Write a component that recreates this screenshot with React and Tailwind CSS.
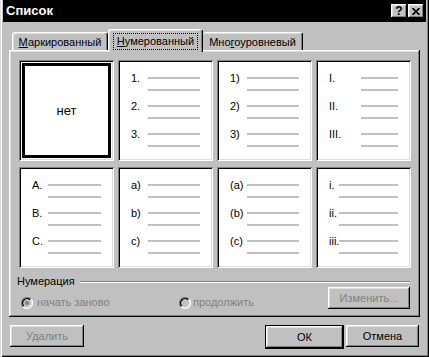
import React from 'react'

const raised = "shadow-[inset_-1px_-1px_0_#000,inset_1px_1px_0_#fff,inset_-2px_-2px_0_#808080,inset_2px_2px_0_#dfdfdf]";
const sunken = "shadow-[inset_1px_1px_0_#808080,inset_-1px_-1px_0_#fff,inset_2px_2px_0_#000,inset_-2px_-2px_0_#dfdfdf]";

const tiles = [
    { labels: ["1.", "2.", "3."], lw: "w-[17px]", ln: "w-[52px]" },
    { labels: ["1)", "2)", "3)"], lw: "w-[17px]", ln: "w-[52px]" },
    { labels: ["I.", "II.", "III."], lw: "w-[32px]", ln: "w-[37px]" },
    { labels: ["A.", "B.", "C."], lw: "w-[16px]", ln: "w-[53px]" },
    { labels: ["a)", "b)", "c)"], lw: "w-[17px]", ln: "w-[52px]" },
    { labels: ["(a)", "(b)", "(c)"], lw: "w-[17px]", ln: "w-[52px]" },
    { labels: ["i.", "ii.", "iii."], lw: "w-[10px]", ln: "w-[59px]" },
]

const ListTile = ({ tile }) => (
    <div className={`bg-white ${sunken} flex flex-col gap-[9px] pt-[12px] pl-[13px]`}>
        {tile.labels.map((l) => (
            <div key={l} className="flex flex-col gap-[5px]">
                <div className="flex h-[12px] items-center">
                    <span className={`${tile.lw} shrink-0 whitespace-nowrap text-[11px] leading-[12px] text-black`}>{l}</span>
                    <span className={`${tile.ln} h-[2px] bg-[#c0c0c0]`} />
                </div>
                <div className="flex">
                    <span className={`${tile.lw} shrink-0`} />
                    <span className={`${tile.ln} h-[2px] bg-[#c0c0c0]`} />
                </div>
            </div>
        ))}
    </div>
)

const Radio = ({ checked }) => (
    <svg width="12" height="12" viewBox="0 0 12 12" className="shrink-0">
        <circle cx="6" cy="6" r="5" fill="#c0c0c0" />
        <path d="M2.11 9.89 A5.5 5.5 0 0 1 9.89 2.11" stroke="#808080" strokeWidth="1.3" fill="none" />
        <path d="M9.89 2.11 A5.5 5.5 0 0 1 2.11 9.89" stroke="#fff" strokeWidth="1.3" fill="none" />
        <path d="M2.82 9.18 A4.5 4.5 0 0 1 9.18 2.82" stroke="#000" strokeWidth="1.3" fill="none" />
        <path d="M9.18 2.82 A4.5 4.5 0 0 1 2.82 9.18" stroke="#dfdfdf" strokeWidth="1.3" fill="none" />
        {checked && <circle cx="6" cy="6" r="2" fill="#808080" />}
    </svg>
)

const Button = ({ children, className = "", disabled }) => (
    <div className={`flex h-[22px] items-center justify-center bg-[#c0c0c0] ${raised} text-[11px] ${disabled ? "text-[#808080]" : "text-black"} ${className}`}>
        {children}
    </div>
)

export default function App() {
    return (
        <div className="flex h-[357px] w-[429px] flex-col bg-[#c0c0c0] px-[3px] pb-[3px] font-['Liberation_Sans',Arial,sans-serif] shadow-[inset_1px_0_0_#dfdfdf,inset_2px_0_0_#fff,inset_-1px_-1px_0_#000,inset_-2px_-2px_0_#808080]">
            {/* Title bar */}
            <div className="flex h-[22px] shrink-0 items-center bg-black pl-[3px] pr-[2px]">
                <span className="text-[13px] font-bold text-white">Список</span>
                <div className="ml-auto flex gap-[1px]">
                    <div className={`flex h-[14px] w-[16px] items-center justify-center bg-[#c0c0c0] ${raised} text-[12px] font-bold leading-none text-black`}>?</div>
                    <div className={`flex h-[14px] w-[16px] items-center justify-center bg-[#c0c0c0] ${raised}`}>
                        <svg width="8" height="7" viewBox="0 0 8 7">
                            <path d="M0.5 0 L7.5 7 M7.5 0 L0.5 7" stroke="#000" strokeWidth="1.6" />
                        </svg>
                    </div>
                </div>
            </div>

            {/* Tabs */}
            <div className="flex h-[28px] shrink-0 items-end pl-[9px] text-[11px] leading-[13px] text-black">
                <div className="flex h-[18px] w-[96px] justify-center rounded-tl-[3px] rounded-tr-[3px] border-l border-t border-r border-l-white border-t-white border-r-black pt-[3px] shadow-[inset_-1px_0_0_#808080,inset_1px_1px_0_#dfdfdf]">
                    <span><u>М</u>аркированный</span>
                </div>
                <div className="relative z-10 -mb-[2px] flex h-[23px] w-[95px] justify-center rounded-tl-[3px] rounded-tr-[3px] border-l border-t border-r border-l-white border-t-white border-r-black bg-[#c0c0c0] pt-[3px] shadow-[inset_-1px_0_0_#808080,inset_1px_1px_0_#dfdfdf]">
                    <span className="h-[17px] border border-dotted border-black px-[3px] pt-[1px]"><u>Н</u>умерованный</span>
                </div>
                <div className="flex h-[18px] w-[100px] justify-center rounded-tl-[3px] rounded-tr-[3px] border-t border-r border-t-white border-r-black pt-[3px] shadow-[inset_-1px_0_0_#808080,inset_0_1px_0_#dfdfdf]">
                    <span>Мно<u>г</u>оуровневый</span>
                </div>
            </div>

            {/* Panel */}
            <div className={`ml-[6px] flex h-[267px] w-[411px] shrink-0 flex-col pl-[10px] pr-[9px] pt-[10px] ${raised}`}>
                <div className="grid grid-cols-[repeat(4,95px)] grid-rows-[repeat(2,101px)] gap-x-[4px] gap-y-[6px]">
                    <div className={`bg-white ${sunken} p-[3px]`}>
                        <div className="flex h-full items-center justify-center border-[3px] border-black text-[13px] text-black">нет</div>
                    </div>
                    {tiles.map((t, i) => (
                        <ListTile key={i} tile={t} />
                    ))}
                </div>

                <div className="-ml-[2px] mr-[1px] mt-[7px] flex h-[13px] items-center gap-[5px] text-[11px] leading-[13px] text-black">
                    <span>Нумерация</span>
                    <div className="h-[2px] flex-1 border-t border-b border-t-[#808080] border-b-white" />
                </div>

                <div className="-mt-[1px] mr-[1px] flex h-[21px] items-start text-[11px] leading-[13px] text-[#808080]">
                    <div className="ml-[2px] mt-[9px] flex w-[158px] items-center gap-[4px]">
                        <Radio checked />
                        <span>начать заново</span>
                    </div>
                    <div className="mt-[9px] flex items-center gap-[2px]">
                        <Radio />
                        <span>продолжить</span>
                    </div>
                    <Button disabled className="ml-auto h-[21px] w-[82px]">Изменить...</Button>
                </div>
            </div>

            {/* Footer buttons */}
            <div className="mt-[8px] flex pl-[7px] pr-[7px]">
                <Button disabled className="w-[74px]">Удалить</Button>
                <div className="ml-auto border border-black">
                    <Button className="h-[20px] w-[77px]">ОК</Button>
                </div>
                <Button className="ml-[2px] w-[73px]">Отмена</Button>
            </div>
        </div>
    )
}
